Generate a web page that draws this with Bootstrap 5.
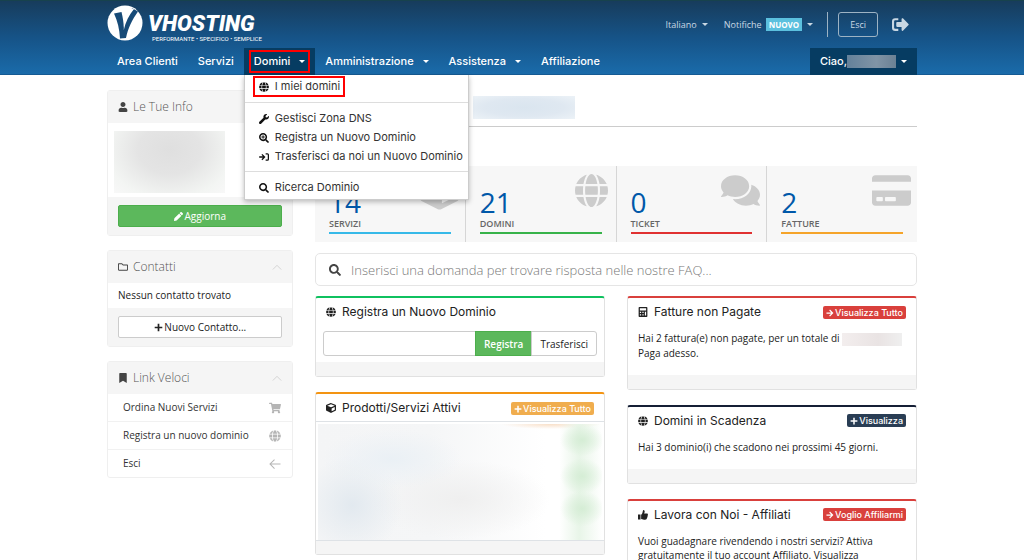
<!DOCTYPE html>
<html lang="it">
<head>
<meta charset="utf-8">
<meta name="viewport" content="width=device-width, initial-scale=1">
<title>VHosting - Area Clienti</title>
<link href="https://cdn.jsdelivr.net/npm/bootstrap@5.3.0/dist/css/bootstrap.min.css" rel="stylesheet">
<style>
:root { --head: Inter, "Liberation Sans", sans-serif; --text: "Open Sans", "Liberation Sans", sans-serif; }
body { font: 10px/14px var(--text); color: #222; background: #fff; }
a { color: inherit; text-decoration: none; }
.page { max-width: 832px; padding: 0 11px; }
.page .row { --bs-gutter-x: 22px; }
.ico { width: 1em; height: 1em; fill: currentColor; flex: none; vertical-align: -1px; }
.caret { display: inline-block; border: 3px solid transparent; border-top-color: currentColor; border-bottom: 0; margin-left: 9px; vertical-align: 2px; }

.site-head { background: linear-gradient(#173c5c, #165387 50%, #1a6baa); border-top: 1px solid #17424d; border-bottom: 1px solid #155a93; color: #fff; }
.top-line { height: 47px; }
.brand-disc { width: 36px; height: 36px; margin-top: 4px; }
.brand-name { font: italic 900 22px/24px Roboto, sans-serif; }
.brand-tag { font: 6px/6px Roboto, sans-serif; }
.brand-words { padding: 11px 0 0 5px; }
.top-tools { font-size: 9px; color: #c9d8e4; }
.top-tools .caret { margin-left: 5px; }
.tag-new { background: #5bc0de; color: #fff; font: 700 8px/13px var(--text); padding: 0 3px; }
.rule { width: 1px; height: 25px; background: #9db3c4; margin: 0 10px 0 14px; }
.btn-out { font-size: 9px; line-height: 15px; padding: 4px 11px; border: 1px solid #9db3c4; border-radius: 3px; color: #c9d8e4; }
.leave { font-size: 17px; margin: 0 8px 0 14px; }
.main-nav { font: 500 11px/27px var(--head); height: 26px; }
.main-nav .nav-item > a { display: block; height: 27px; padding: 0 10px; white-space: nowrap; }
.main-nav .open > a, .greet { background: #063c62; }
.greet { padding: 0 10px; height: 27px; }
.greet .caret { margin-left: 5px; }
.hidden-name { width: 49px; height: 13px; background: linear-gradient(90deg, #64819a, #8094a6 60%, #6b8194); }
.outlined { outline: 2px solid #f00; }
.open .outlined { outline-offset: 3px; }
.open .outlined.first { outline-offset: -2px; }
.hit { display: inline-block; line-height: 13px; }
.menu-drop { display: block; top: 27px; left: 0; width: 225px; padding: 2px 0; margin: 0; border: 1px solid #ccc; border-top: 0; border-radius: 0; box-shadow: 0 2px 5px #0004; }
.menu-drop a { display: flex; align-items: center; font: 11px/19px var(--head); color: #333; margin-left: 8px; padding: 0 6px; width: max-content; }
.menu-drop a.first { line-height: 21px; margin-top: -1px; padding-right: 5px; }
.menu-drop .ico { margin-right: 6px; width: 10px; height: 10px; color: #111; }
.menu-drop hr { margin: 5px 0 6px; color: #ddd; opacity: 1; }

.content-area { padding-top: 15px; }
.side-box { border: 1px solid #efefef; border-radius: 3px; margin-bottom: 14px; background: #fff; }
.side-head { background: #f5f5f5; color: #555; font-size: 12px; font-weight: 300; line-height: 32px; padding: 0 10px; }
.side-head .ico { width: 10px; height: 10px; margin-right: 5px; color: #444; }
.side-head .ico.chev { color: #ccc; margin: 0; }
.side-foot { background: #f5f5f5; padding: 8px 10px; }
.btn-side { display: block; width: 100%; font-size: 10px; line-height: 14px; padding: 3px; border-radius: 2px; }
.btn-side .ico { width: 9px; height: 9px; margin-right: -1px; }
.btn-green { background: #5cb85c; color: #fff; border: 1px solid #4cae4c; }
.btn-plain { background: #fff; color: #222; border: 1px solid #ccc; }
.blur-wrap { padding: 8px 6px 4px; }
.blur-info { width: 111px; height: 62px; background: radial-gradient(ellipse at 50% 30%, #dfdfdf, #e4e4e4 40%, #f3f5f3 80%, #f8f8f8); }
.contact-note { line-height: 25px; padding: 0 10px; margin: 0; }
.quick a { display: flex; align-items: center; justify-content: space-between; font-size: 10px; line-height: 27px; padding: 0 11px 0 15px; border-bottom: 1px solid #f1f1f1; color: #333; }
.quick a:last-child { border: 0; }
.quick .ico { width: 12px; height: 12px; color: #b5b5b5; }

.headline { height: 37px; border-bottom: 1px solid #ccc; margin-bottom: 39px; padding: 6px 0 0 158px; }
.blur-name { width: 102px; height: 23px; background: radial-gradient(ellipse, #dae5ef, #dfe8f1 55%, #ecf2f7); }
.tiles { background: #f7f7f7; height: 76px; }
.tile { flex: 1; padding: 21px 14px 0; border-left: 1px solid #d6d6d6; color: #666; font-size: 9px; line-height: 11px; font-weight: 600; }
.tile:first-child { border-left: 0; }
.tile strong { display: block; font-size: 28px; line-height: 31px; font-weight: 400; color: #0058a9; }
.tile .stripe { height: 2px; margin-top: 3px; }
.tile .ico { position: absolute; top: 5px; right: 6px; width: 39px; height: 39px; color: #ccc; }
.tile .ico.globe { width: 33px; right: 8px; }
.faq { height: 33px; margin: 11px 0 10px; border: 1px solid #e5e5e5; border-radius: 5px; padding: 0 13px; }
.faq input { border: 0; outline: 0; flex: 1; min-width: 0; font: 300 13px/20px var(--text); color: #777; padding: 0 0 0 10px; }
.faq input::placeholder { color: #777; opacity: 1; }
.faq .ico { width: 12px; height: 12px; color: #444; }

.info-box { border: 1px solid #e1e1e1; border-top: 2px solid var(--tone); border-radius: 3px; background: #fff; margin-bottom: 15px; }
.info-title { font: 12px/16px var(--head); color: #222; padding: 6px 10px 5px; margin: 0; }
.info-title .ico { width: 10px; height: 10px; margin-right: 6px; }
.info-title .btn { font: 500 9px/13px var(--head); padding: 0 3px; border: 0; border-radius: 2px; color: #fff; background: var(--fill, var(--tone)); }
.info-title .btn .ico { width: 8px; height: 8px; margin-right: 1px; }
.info-foot { background: #f5f5f5; height: 14px; }
.info-text { padding: 6px 10px 15px; margin: 0; }
.domain { padding: 6px 7px; }
.domain .form-control, .domain .btn { font-size: 10px; line-height: 14px; height: 25px; padding: 0 8px; border-color: #ccc; border-radius: 3px; }
.domain .btn-green { font-weight: 600; border-color: #4cae4c; }
.blur-total { display: inline-block; width: 60px; height: 13px; vertical-align: middle; background: linear-gradient(90deg, #f3eeee, #e9e3e3 60%, #efefef); }
.blur-list { height: 116px; margin: 2px 2px 0; background:
  radial-gradient(ellipse 22px 16px at 93% 14%, #d5edd5, transparent),
  radial-gradient(ellipse 22px 18px at 93% 45%, #d5edd5, transparent),
  radial-gradient(ellipse 22px 18px at 93% 73%, #d5edd5, transparent),
  linear-gradient(90deg, transparent 85%, #e8f5e8 92%, transparent),
  radial-gradient(ellipse 50px 5px at 82% 0, #f8dfc8, transparent),
  radial-gradient(ellipse 70px 30px at 26% 30%, #eaf0f5, transparent),
  radial-gradient(ellipse 50px 50px at 12% 70%, #e2e9ef, transparent),
  radial-gradient(ellipse 90px 40px at 50% 65%, #efefef, transparent),
  linear-gradient(90deg, #f4f5f6, #f5f6f7 40%, #fff 80%); }
</style>
</head>
<body>
<svg class="d-none" xmlns="http://www.w3.org/2000/svg">
<symbol id="globe" viewBox="0 0 496 512"><path d="M336.5 160C322 70.7 287.8 8 248 8s-74 62.7-88.5 152h177zM152 256c0 22.2 1.2 43.5 3.3 64h185.3c2.1-20.5 3.3-41.8 3.3-64s-1.2-43.5-3.3-64H155.3c-2.1 20.5-3.3 41.8-3.3 64zm324.7-96c-28.6-67.9-86.5-120.4-158-141.6 24.4 33.8 41.2 84.7 50 141.6h108zM177.2 18.4C105.8 39.6 47.8 92.1 19.3 160h108c8.7-56.9 25.5-107.8 49.9-141.6zM487.4 192H372.7c2.1 21 3.3 42.5 3.3 64s-1.2 43-3.3 64h114.6c5.5-20.5 8.6-41.8 8.6-64s-3.1-43.5-8.5-64zM120 256c0-21.5 1.2-43 3.3-64H8.6C3.2 212.5 0 233.8 0 256s3.2 43.5 8.6 64h114.6c-2-21-3.2-42.5-3.2-64zm39.5 96c14.5 89.3 48.7 152 88.5 152s74-62.7 88.5-152h-177zm159.3 141.6c71.4-21.2 129.4-73.7 158-141.6h-108c-8.8 56.9-25.6 107.8-50 141.6zM19.3 352c28.6 67.9 86.5 120.4 158 141.6-24.4-33.8-41.2-84.7-50-141.6h-108z"/></symbol>
<symbol id="search" viewBox="0 0 512 512"><path d="M505 442.7L405.3 343c-4.5-4.5-10.6-7-17-7H372c27.6-35.3 44-79.7 44-128C416 93.1 322.9 0 208 0S0 93.1 0 208s93.1 208 208 208c48.3 0 92.7-16.4 128-44v16.3c0 6.4 2.5 12.5 7 17l99.7 99.7c9.4 9.4 24.6 9.4 33.9 0l28.3-28.3c9.4-9.4 9.4-24.6.1-34zM208 336c-70.7 0-128-57.2-128-128 0-70.7 57.2-128 128-128 70.7 0 128 57.2 128 128 0 70.7-57.2 128-128 128z"/></symbol>
<symbol id="zoom" viewBox="0 0 512 512"><use href="#search" width="512" height="512"/><path d="M184 120h48v64h64v48h-64v64h-48v-64h-64v-48h64z"/></symbol>
<symbol id="cube" viewBox="0 0 512 512"><path d="M239.1 6.3l-208 78c-18.7 7-31.1 25-31.1 45v225.1c0 18.2 10.3 34.8 26.5 42.9l208 104c13.5 6.8 29.4 6.8 42.9 0l208-104c16.3-8.1 26.5-24.8 26.5-42.9V129.3c0-20-12.4-37.9-31.1-44.9l-208-78C262 2.2 250 2.2 239.1 6.3zM256 68.4l192 72v1.1l-192 78-192-78v-1.1l192-72zm32 356V275.5l160-65v133.9l-160 80z"/></symbol>
<symbol id="card-pay" viewBox="0 0 576 512"><path d="M0 432c0 26.500 21.500 48 48 48h480c26.500 0 48-21.500 48-48V256H0v176zm192-68c0-6.600 5.400-12 12-12h136c6.600 0 12 5.400 12 12v40c0 6.600-5.400 12-12 12H204c-6.600 0-12-5.400-12-12v-40zm-128 0c0-6.600 5.400-12 12-12h72c6.600 0 12 5.400 12 12v40c0 6.600-5.400 12-12 12H76c-6.600 0-12-5.400-12-12v-40zM576 80v48H0V80c0-26.500 21.500-48 48-48h480c26.500 0 48 21.500 48 48z"/></symbol>
<symbol id="chat" viewBox="0 0 576 512"><path d="M416 192c0-88.400-93.100-160-208-160S0 103.600 0 192c0 34.300 14.100 65.900 38 92-13.400 30.200-35.500 54.200-35.800 54.500-2.200 2.300-2.800 5.700-1.500 8.700S4.800 352 8 352c36.600 0 66.900-12.300 88.700-25 32.200 15.700 70.300 25 111.300 25 114.900 0 208-71.600 208-160zm122 220c23.900-26 38-57.700 38-92 0-66.900-53.500-124.200-129.300-148.100.9 6.600 1.300 13.300 1.300 20.100 0 105.900-107.700 192-240 192-10.800 0-21.300-.8-31.700-1.900C207.800 439.600 281.800 480 368 480c41 0 79.100-9.200 111.300-25 21.800 12.700 52.100 25 88.700 25 3.200 0 6.100-1.900 7.300-4.800 1.300-2.900.7-6.300-1.500-8.700-.3-.3-22.400-24.200-35.800-54.500z"/></symbol>
<symbol id="user" viewBox="0 0 448 512"><path d="M224 256c70.700 0 128-57.300 128-128S294.700 0 224 0 96 57.300 96 128s57.300 128 128 128zm89.600 32h-16.700c-22.200 10.200-46.900 16-72.900 16s-50.600-5.800-72.900-16h-16.700C60.200 288 0 348.200 0 422.400V464c0 26.500 21.500 48 48 48h352c26.500 0 48-21.500 48-48v-41.600c0-74.200-60.200-134.400-134.400-134.400z"/></symbol>
<symbol id="bookmark" viewBox="0 0 384 512"><path d="M0 512V48C0 21 21 0 48 0h288c27 0 48 21 48 48v464L192 400z"/></symbol>
<symbol id="folder" viewBox="0 0 512 512"><path d="M464 128H272l-54.600-54.600c-6-6-14.100-9.400-22.600-9.400H48C21.500 64 0 85.500 0 112v288c0 26.500 21.500 48 48 48h416c26.500 0 48-21.500 48-48V176c0-26.500-21.500-48-48-48zm0 272H48V112h140.100l54.600 54.600c6 6 14.100 9.400 22.600 9.400H464v224z"/></symbol>
<symbol id="wrench" viewBox="0 0 512 512"><path d="M507.700 109.100c-2.200-9-13.500-12.100-20.100-5.500l-74.400 74.400-67.900-11.300-11.300-67.900 74.400-74.400c6.600-6.600 3.400-17.900-5.700-20.200-47.400-11.700-99.500.9-136.600 37.900-39.600 39.600-50.500 97.100-34 147.200L18.700 402.800c-25 25-25 65.500 0 90.500s65.500 25 90.500 0l213.200-213.200c50.100 16.700 107.500 5.700 147.400-34.200 37.100-37.100 49.700-89.300 37.900-136.800z"/></symbol>
<symbol id="enter" viewBox="0 0 512 512"><path d="M10 216h190l-75-75 48-45 160 160-160 160-48-45 75-75H10zM340 64h92q80 0 80 80v224q0 80-80 80h-92v-66h92q16 0 16-16V146q0-16-16-16h-92z"/></symbol>
<symbol id="logout" viewBox="0 0 512 512"><path d="M190 64v64H96q-32 0-32 32v192q0 32 32 32h94v64H96q-96 0-96-96V160q0-96 96-96zM497 273L329 441c-15 15-41 5-41-17v-96H152q-24 0-24-24v-96q0-24 24-24h136V88c0-21 26-32 41-17l168 168q15 17 0 34z"/></symbol>
<symbol id="pencil" viewBox="0 0 512 512"><path d="M497.900 142.100l-46.100 46.100c-4.700 4.700-12.300 4.700-17 0l-111-111c-4.700-4.700-4.700-12.300 0-17l46.100-46.100c18.700-18.700 49.100-18.700 67.900 0l60.100 60.100c18.800 18.700 18.800 49.100 0 67.900zM284.200 99.800L21.600 362.400.4 483.900c-2.900 16.400 11.400 30.600 27.800 27.800l121.500-21.300 262.600-262.600c4.700-4.700 4.700-12.300 0-17l-111-111c-4.800-4.700-12.400-4.700-17.100 0z"/></symbol>
<symbol id="cart" viewBox="0 0 576 512"><path d="M528 301l47-208C579 78 567 64 552 64H159l-9-45C148 8 138 0 127 0H24C11 0 0 11 0 24v16c0 13 11 24 24 24h70l70 343c-17 10-28 28-28 49 0 31 25 56 56 56s56-25 56-56c0-16-6-30-17-40h210c-10 10-17 24-17 40 0 31 25 56 56 56s56-25 56-56c0-22-13-41-32-50l6-25c3-15-8-29-24-29H218l-6-32h293c11 0 21-8 23-19z"/></symbol>
<symbol id="plus" viewBox="0 0 512 512"><path d="M208 40h96v168h168v96H304v168h-96V304H40v-96h168z"/></symbol>
<symbol id="right" viewBox="0 0 512 512"><path d="M30 216h300L205 90l50-56 222 222-222 222-50-56 125-126H30z"/></symbol>
<symbol id="left" viewBox="0 0 512 512"><path d="M490 234H95L250 80l-30-32L12 256l208 208 30-32L95 278h395z"/></symbol>
<symbol id="chevron" viewBox="0 0 12 12"><path d="M1 9l5-5 5 5" fill="none" stroke="currentColor"/></symbol>
<symbol id="calc" viewBox="0 0 448 512"><path fill-rule="evenodd" d="M40 0h368q40 0 40 40v432q0 40-40 40H40q-40 0-40-40V40Q0 0 40 0zm24 64v112h320V64zm0 176v64h64v-64zm128 0v64h64v-64zm128 0v192h64V240zM64 368v64h64v-64zm128 0v64h64v-64z"/></symbol>
<symbol id="thumb" viewBox="0 0 512 512"><path d="M0 224h128v256H0zM160 240c70-65 72-115 88-195 8-40 45-55 75-25 38 38 15 110-10 156h140c52 0 75 55 40 91 15 29 8 56-13 73 8 30-2 52-23 67 4 58-30 89-94 89-80 0-125-34-203-40z"/></symbol>
</svg>

<div class="vh-100 overflow-hidden">
<header class="site-head">
  <div class="container-fluid page">
    <div class="top-line d-flex justify-content-between">
      <a href="#" class="d-flex" aria-label="VHosting">
        <svg class="brand-disc" viewBox="0 0 36 36"><circle cx="18" cy="18" r="17.500" fill="#fff"/><path d="M7 8.500L14.500 7c1.500 6 2 10 2.300 15C19 14 21.500 8 25 3l6 3.500C25 15 21 23 19 33l-6 .5C12.500 24 10.500 16 7 8.500z" fill="#174b78"/><path d="M9.500 10l4-.7c1.500 6 2 12 2 19l.7.500C17.500 19 21 11 26.500 5l1.500 1c-5.500 8-9 16-11 26l-3 .5C13.600 24 12 17 9.500 10z" fill="#174b78"/><path d="M22 2.500L27 4c-5 6-8.500 13-10.200 21C16.800 17 18 9 22 2.500z" fill="#fff"/></svg>
        <div class="brand-words"><div class="brand-name">VHOSTING</div><div class="brand-tag ps-1">PERFORMANTE • SPECIFICO • SEMPLICE</div></div>
      </a>
      <div class="top-tools d-flex align-items-center">
        <a href="#">Italiano<span class="caret"></span></a>
        <a href="#" class="ms-3 d-flex align-items-center">Notifiche <span class="tag-new ms-1">NUOVO</span><span class="caret"></span></a>
        <span class="rule"></span>
        <button class="btn btn-out" type="button">Esci</button>
        <a href="#" class="leave" aria-label="Esci"><svg class="ico"><use href="#logout"/></svg></a>
      </div>
    </div>
    <nav class="main-nav d-flex justify-content-between">
      <ul class="nav flex-nowrap">
        <li class="nav-item"><a href="#">Area Clienti</a></li>
        <li class="nav-item"><a href="#">Servizi</a></li>
        <li class="nav-item open position-relative"><a href="#"><span class="outlined hit">Domini<span class="caret"></span></span></a>
          <div class="dropdown-menu menu-drop">
            <a href="#" class="outlined first"><svg class="ico"><use href="#globe"/></svg>I miei domini</a>
            <hr>
            <a href="#"><svg class="ico"><use href="#wrench"/></svg>Gestisci Zona DNS</a>
            <a href="#"><svg class="ico"><use href="#zoom"/></svg>Registra un Nuovo Dominio</a>
            <a href="#"><svg class="ico"><use href="#enter"/></svg>Trasferisci da noi un Nuovo Dominio</a>
            <hr>
            <a href="#"><svg class="ico"><use href="#search"/></svg>Ricerca Dominio</a>
          </div>
        </li>
        <li class="nav-item"><a href="#">Amministrazione<span class="caret"></span></a></li>
        <li class="nav-item"><a href="#">Assistenza<span class="caret"></span></a></li>
        <li class="nav-item"><a href="#">Affiliazione</a></li>
      </ul>
      <a href="#" class="greet d-flex align-items-center">Ciao,<span class="hidden-name"></span><span class="caret"></span></a>
    </nav>
  </div>
</header>

<div class="container-fluid page content-area">
  <div class="row">
    <aside class="col-3">
      <section class="side-box">
        <div class="side-head"><svg class="ico"><use href="#user"/></svg>Le Tue Info</div>
        <div class="blur-wrap"><div class="blur-info"></div></div>
        <div class="side-foot"><button class="btn btn-side btn-green" type="button"><svg class="ico"><use href="#pencil"/></svg> Aggiorna</button></div>
      </section>
      <section class="side-box">
        <div class="side-head d-flex align-items-center"><svg class="ico"><use href="#folder"/></svg>Contatti<svg class="ico chev ms-auto"><use href="#chevron"/></svg></div>
        <p class="contact-note">Nessun contatto trovato</p>
        <div class="side-foot"><button class="btn btn-side btn-plain" type="button"><svg class="ico"><use href="#plus"/></svg> Nuovo Contatto...</button></div>
      </section>
      <section class="side-box">
        <div class="side-head d-flex align-items-center"><svg class="ico"><use href="#bookmark"/></svg>Link Veloci<svg class="ico chev ms-auto"><use href="#chevron"/></svg></div>
        <div class="quick">
          <a href="#">Ordina Nuovi Servizi<svg class="ico"><use href="#cart"/></svg></a>
          <a href="#">Registra un nuovo dominio<svg class="ico"><use href="#globe"/></svg></a>
          <a href="#">Esci<svg class="ico"><use href="#left"/></svg></a>
        </div>
      </section>
    </aside>
    <main class="col-9">
      <div class="headline"><div class="blur-name"></div></div>
      <div class="tiles d-flex">
        <a href="#" class="tile position-relative"><svg class="ico"><use href="#cube"/></svg><strong>14</strong>SERVIZI<div class="stripe" style="background:#36b9e8"></div></a>
        <a href="#" class="tile position-relative"><svg class="ico globe"><use href="#globe"/></svg><strong>21</strong>DOMINI<div class="stripe" style="background:#37b34a"></div></a>
        <a href="#" class="tile position-relative"><svg class="ico"><use href="#chat"/></svg><strong>0</strong>TICKET<div class="stripe" style="background:#e03131"></div></a>
        <a href="#" class="tile position-relative"><svg class="ico"><use href="#card-pay"/></svg><strong>2</strong>FATTURE<div class="stripe" style="background:#f5a42a"></div></a>
      </div>
      <div class="faq d-flex align-items-center"><svg class="ico"><use href="#search"/></svg><input type="text" aria-label="Cerca nelle FAQ" placeholder="Inserisci una domanda per trovare risposta nelle nostre FAQ..."></div>
      <div class="row">
        <div class="col-6">
          <section class="info-box" style="--tone:#0fc15f">
            <h3 class="info-title"><svg class="ico"><use href="#globe"/></svg>Registra un Nuovo Dominio</h3>
            <div class="domain"><div class="input-group"><input class="form-control" type="text" aria-label="Dominio"><button class="btn btn-green" type="button">Registra</button><button class="btn btn-plain" type="button">Trasferisci</button></div></div>
            <div class="info-foot"></div>
          </section>
          <section class="info-box" style="--tone:#f39412;--fill:#f0ad4e">
            <h3 class="info-title d-flex align-items-center border-bottom"><svg class="ico"><use href="#cube"/></svg>Prodotti/Servizi Attivi<button class="btn ms-auto" type="button"><svg class="ico"><use href="#plus"/></svg>Visualizza Tutto</button></h3>
            <div class="blur-list"></div>
            <div class="info-foot border-top"></div>
          </section>
        </div>
        <div class="col-6">
          <section class="info-box" style="--tone:#d9403c">
            <h3 class="info-title d-flex align-items-center"><svg class="ico"><use href="#calc"/></svg>Fatture non Pagate<button class="btn ms-auto" type="button"><svg class="ico"><use href="#right"/></svg>Visualizza Tutto</button></h3>
            <p class="info-text">Hai 2 fattura(e) non pagate, per un totale di <span class="blur-total"></span> Paga adesso.</p>
            <div class="info-foot"></div>
          </section>
          <section class="info-box" style="--tone:#151f35;--fill:#293d54">
            <h3 class="info-title d-flex align-items-center"><svg class="ico"><use href="#globe"/></svg>Domini in Scadenza<button class="btn ms-auto" type="button"><svg class="ico"><use href="#plus"/></svg>Visualizza</button></h3>
            <p class="info-text">Hai 3 dominio(i) che scadono nei prossimi 45 giorni.</p>
            <div class="info-foot"></div>
          </section>
          <section class="info-box" style="--tone:#d9403c">
            <h3 class="info-title d-flex align-items-center"><svg class="ico"><use href="#thumb"/></svg>Lavora con Noi - Affiliati<button class="btn ms-auto" type="button"><svg class="ico"><use href="#right"/></svg>Voglio Affiliarmi</button></h3>
            <p class="info-text">Vuoi guadagnare rivendendo i nostri servizi? Attiva gratuitamente il tuo account Affiliato. Visualizza</p>
          </section>
        </div>
      </div>
    </main>
  </div>
</div>
</div>
<script src="https://cdn.jsdelivr.net/npm/bootstrap@5.3.0/dist/js/bootstrap.bundle.min.js"></script>
</body>
</html>
